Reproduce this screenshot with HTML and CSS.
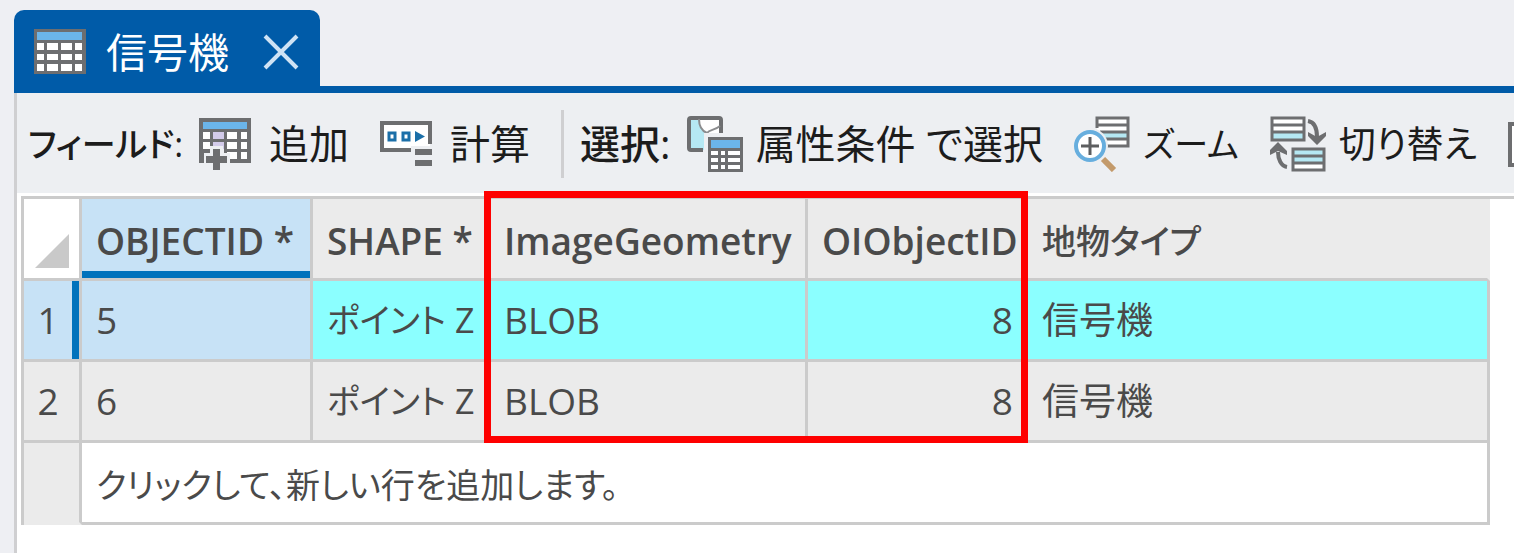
FILE: index.html
```
<!DOCTYPE html>
<html lang="ja">
<head>
    <meta charset="UTF-8">
    <meta name="viewport" content="width=device-width, initial-scale=1.0">
    <title>信号機</title>
    <link rel="stylesheet" href="styles.css">
</head>
<body>
    <div class="tabs">
        <div class="tab">
            <svg class="tab-icon" width="52" height="46" viewBox="0 0 52 46">
                <rect x="0" y="0" width="52" height="45" fill="#6d6e70"/>
                <rect x="3" y="3" width="45" height="8" fill="#6bb5ea"/>
                <path fill="#fff" d="M3 14h7v7H3zM13 14h11v7H13zM27 14h11v7H27zM41 14h7v7h-7zM3 25h7v6H3zM13 25h11v6H13zM27 25h11v6H27zM41 25h7v6h-7zM3 35h7v7H3zM13 35h11v7H13zM27 35h11v7H27zM41 35h7v7h-7z"/>
            </svg>
            <span class="tab-title">信号機</span>
            <button class="close" aria-label="閉じる">
                <svg width="36" height="36" viewBox="0 0 36 36"><path d="M2 2l32 32M34 2L2 34" stroke="#cfe3f5" stroke-width="4" fill="none"/></svg>
            </button>
        </div>
    </div>

    <div class="panel">
        <div class="toolbar">
            <span class="label kana">フィールド:</span>
            <button class="tool field">
                <svg width="52" height="52" viewBox="0 0 52 52">
                    <path fill="#6d6e70" d="M0 0h52v45H31v-8H25v-7H11v7H5v8H0z"/>
                    <rect x="4" y="4" width="44" height="7" fill="#6bb5ea"/>
                    <path fill="#fff" d="M4 14h7v7H4zM28 14h10v7H28zM42 14h6v7h-6zM4 24h7v7H4zM28 24h10v7H28zM42 24h6v7h-6zM42 34h6v7h-6zM28 34h10v7H28z"/>
                    <path fill="#d3cbea" d="M14 14h11v7H14zM14 24h11v7H14z"/>
                    <path fill="#edeff2" d="M11 28h13v7h7v13H5V35h6z"/>
                    <path d="M17.500 31v21M7 41.500h21" stroke="#6d6e70" stroke-width="7"/>
                </svg>
                追加
            </button>
            <button class="tool field">
                <svg width="52" height="46" viewBox="0 0 52 46">
                    <path fill="#fff" d="M2 2h48v27H2z"/>
                    <path d="M31 29H2V2h48v21" fill="none" stroke="#6d6e70" stroke-width="4"/>
                    <path fill="none" stroke="#1b6fa8" stroke-width="3" d="M9 12h6v7H9zM23 12h6v7h-6z"/>
                    <path fill="#1b6fa8" d="M35 10l10 5.500-10 5.500z"/>
                    <path fill="#edeff2" d="M31 25h21v21H31z"/>
                    <path fill="#6d6e70" d="M35 28h17v6H35zM35 39h17v6H35z"/>
                </svg>
                計算
            </button>
            <span class="separator"></span>
            <span class="label">選択:</span>
            <button class="tool">
                <svg width="56" height="56" viewBox="0 0 56 56">
                    <rect x="2" y="2" width="32" height="32" rx="2" fill="#b5e8f3"/>
                    <path d="M12 2h22v15H20c-6-2-8-8-8-15z" fill="#fff"/>
                    <path d="M16 34H4a2 2 0 0 1-2-2V4a2 2 0 0 1 2-2h28a2 2 0 0 1 2 2v13" fill="none" stroke="#6d6e70" stroke-width="4"/>
                    <path d="M12 3c0 8 3 12 8 14 3-4 7-2 13-7" fill="none" stroke="#8b8c8e" stroke-width="2"/>
                    <path fill="#edeff2" d="M17 17h39v39H17z"/>
                    <path fill="#6d6e70" d="M21 21h35v35H21z"/>
                    <path fill="#6bb5ea" d="M24 24h29v8H24z"/>
                    <path fill="#fff" d="M24 35h7v4h-7zM34 35h4v4h-4zM41 35h12v4H41zM24 42h7v4h-7zM34 42h4v4h-4zM41 42h12v4H41zM24 49h7v4h-7zM34 49h4v4h-4zM41 49h12v4H41z"/>
                </svg>
                属性条件 で選択
            </button>
            <button class="tool kana">
                <svg width="56" height="56" viewBox="0 0 56 56">
                    <path fill="#fff" d="M23 2h31v28H23z"/>
                    <path fill="#b5e8f3" d="M28 16h25v6H28z"/>
                    <path d="M23 12V2h31v28H33M23 9h31M26 16h28M30 23h24" fill="none" stroke="#6d6e70" stroke-width="3"/>
                    <circle cx="16" cy="30" r="18" fill="#edeff2"/>
                    <path d="M29 43l11 11" stroke="#c39a6b" stroke-width="6"/>
                    <circle cx="16" cy="30" r="14" fill="#fff" stroke="#67aede" stroke-width="4"/>
                    <path d="M16 21v18M7 30h18" stroke="#5d5e60" stroke-width="3"/>
                </svg>
                ズーム
            </button>
            <button class="tool mixed">
                <svg width="56" height="56" viewBox="0 0 56 56">
                    <path fill="#fff" d="M2 2h32v22H2zM23 33h31v21H23z"/>
                    <path fill="#b5e8f3" d="M2 17h32v7H2zM23 34h31v6H23zM23 41h31v6H23z"/>
                    <path d="M2 2h32v22H2zM2 9h32M2 16h32M23 33h31v21H23zM23 40h31M23 47h31" fill="none" stroke="#6d6e70" stroke-width="3"/>
                    <path d="M38 5c6 1 9 7 9 16M17 51c-6-1-9-8-9-15" fill="none" stroke="#6d6e70" stroke-width="4"/>
                    <path d="M38 16l9 5 9-5v4l-9 9-9-9zM0 39l8-4 9 4v-4l-9-9-8 8z" fill="#6d6e70"/>
                </svg>
                切り替え
            </button>
            <button class="tool" aria-label="ハイライト">
                <svg width="52" height="45" viewBox="0 0 52 45"><path fill="#fff" stroke="#6d6e70" stroke-width="4" d="M2 2h48v41H2z"/></svg>
            </button>
        </div>

        <div class="grid">
            <table>
                <colgroup>
                    <col class="col-row">
                    <col class="col-id">
                    <col class="col-shape">
                    <col class="col-geometry">
                    <col class="col-object">
                    <col>
                </colgroup>
                <thead>
                    <tr>
                        <td class="corner"><svg width="34" height="34" viewBox="0 0 34 34"><path fill="#c9c9c9" d="M34 0v34H0z"/></svg></td>
                        <th class="current">OBJECTID *</th>
                        <th>SHAPE *</th>
                        <th>ImageGeometry</th>
                        <th>OIObjectID</th>
                        <th class="plain">地物タイプ</th>
                    </tr>
                </thead>
                <tbody>
                    <tr class="selected">
                        <th class="current">1</th>
                        <td class="current">5</td>
                        <td class="kana">ポイント Z</td>
                        <td>BLOB</td>
                        <td class="number">8</td>
                        <td>信号機</td>
                    </tr>
                    <tr>
                        <th>2</th>
                        <td>6</td>
                        <td class="kana">ポイント Z</td>
                        <td>BLOB</td>
                        <td class="number">8</td>
                        <td>信号機</td>
                    </tr>
                    <tr class="new-row">
                        <th></th>
                        <td class="kana" colspan="5"><button>クリックして、新しい行を追加します。</button></td>
                    </tr>
                </tbody>
            </table>
            <div class="callout"></div>
        </div>
    </div>
</body>
</html>
```
FILE: styles.css
```
* {
    box-sizing: border-box;
}
body {
    margin: 0;
    padding: 10px 0 0 14px;
    min-height: 100vh;
    display: flex;
    flex-direction: column;
    overflow: hidden;
    background-color: #eeeff3;
    font-family: "Open Sans", "Noto Sans CJK JP", sans-serif;
    font-feature-settings: "palt";
    font-size: 37px;
    color: #4a4a4a;
}
button {
    padding: 0;
    border: none;
    background: none;
    font: inherit;
    font-feature-settings: inherit;
    color: inherit;
    white-space: nowrap;
    cursor: pointer;
}
svg {
    display: block;
    flex: none;
}
.tabs {
    border-bottom: 7px solid #005ba8;
}
.tab {
    display: inline-flex;
    align-items: center;
    height: 76px;
    padding: 7px 21px 0 20px;
    border-radius: 10px 10px 0 0;
    background-color: #005ba8;
    color: #fff;
    vertical-align: top;
}
.tab-icon {
    margin-right: 20px;
}
.tab-title {
    margin-right: 34px;
    font-size: 41px;
    line-height: 48px;
}
.panel {
    flex: 1;
    border-left: 3px solid #cfcfd1;
    background-color: #fff;
}
.toolbar {
    display: flex;
    align-items: center;
    height: 100px;
    padding: 2px 0 0 11px;
    overflow: hidden;
    background-color: #edeff2;
    font-size: 40px;
    line-height: 48px;
    color: #1c1c1c;
}
.label {
    flex: none;
    margin-right: 16px;
    font-weight: 500;
}
.tool {
    display: flex;
    flex: none;
    align-items: center;
    gap: 13px;
    margin-right: 31px;
}
.tool.field {
    gap: 18px;
}
.tool.mixed {
    font-size: 37px;
}
.separator {
    flex: none;
    width: 3px;
    height: 68px;
    margin-right: 16px;
    background-color: #cfcfd1;
}
.kana {
    font-size: 34px;
}
.grid {
    position: relative;
    margin: 3px 0 0 4px;
    border-top: 3px solid #cbcbcb;
}
table {
    width: calc(100% - 24px);
    border-left: 3px solid #cbcbcb;
    border-spacing: 0;
    table-layout: fixed;
}
.col-row {
    width: 58px;
}
.col-id {
    width: 231px;
}
.col-shape {
    width: 177px;
}
.col-geometry {
    width: 318px;
}
.col-object {
    width: 220px;
}
th, td {
    height: 81px;
    padding: 0 12px 0 14px;
    border-right: 3px solid #cbcbcb;
    border-bottom: 3px solid #cbcbcb;
    background-color: #ebebeb;
    line-height: 48px;
    text-align: left;
    white-space: nowrap;
}
thead th {
    height: 82px;
    padding-top: 4px;
    font-size: 37px;
    font-weight: 600;
}
thead .plain {
    border-right-color: #ebebeb;
    font-size: 34px;
    font-weight: 500;
}
thead .current {
    background-color: #c7e2f6;
    box-shadow: inset 0 -7px #0072bc;
}
.corner {
    padding: 24px 10px 0 11px;
    background-color: #fff;
}
tbody th {
    padding: 0 7px 0 0;
    font-weight: 400;
    text-align: center;
}
.selected td {
    background-color: #8bffff;
}
.selected .current {
    background-color: #c7e2f6;
}
.selected th.current {
    box-shadow: inset -7px 0 #0072bc;
}
.number {
    text-align: right;
}
.new-row td {
    height: 82px;
    padding-top: 4px;
    background-color: #fff;
}
.new-row th {
    border-bottom-color: #ebebeb;
}
.callout {
    position: absolute;
    top: -8px;
    left: 463px;
    width: 544px;
    height: 252px;
    border: 7px solid #fe0000;
    pointer-events: none;
}
```
